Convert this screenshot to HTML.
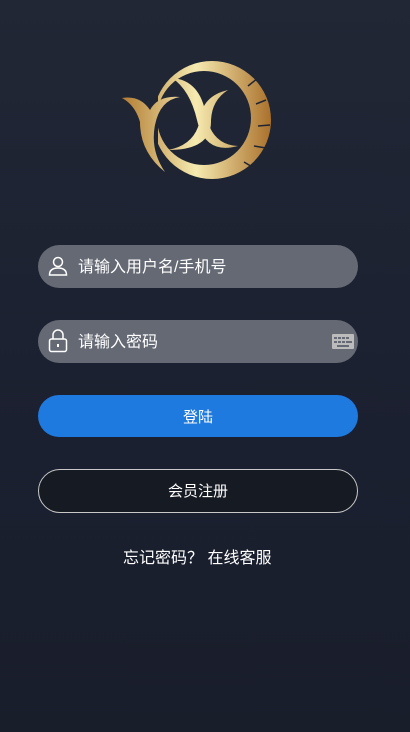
<!DOCTYPE html>
<html><head><meta charset="utf-8"><style>
body{margin:0;width:410px;height:732px;overflow:hidden;background:linear-gradient(#212735,#1b2030 60%,#191e2b);font-family:"Liberation Sans","Noto Sans CJK SC",sans-serif;position:relative}
.in{position:absolute;left:38px;width:320px;height:43px;border-radius:22px;background:#646974;color:#fff;font-size:16px;line-height:45px}
.in span{position:absolute;left:40px}
.btn{position:absolute;left:38px;width:320px;height:42px;border-radius:22px;text-align:center;line-height:46px;color:#fff;font-size:15px}
</style></head><body>
<svg style="position:absolute;left:0;top:0" width="410" height="200">
<defs><linearGradient id="g2" gradientUnits="userSpaceOnUse" x1="120" y1="0" x2="272" y2="0"><stop offset="0" stop-color="#b07a30"/><stop offset=".5" stop-color="#f6eab0"/><stop offset="1" stop-color="#a96f2a"/></linearGradient>
<mask id="m"><rect width="410" height="200" fill="#fff"/><circle cx="204" cy="118" r="47" fill="#000"/><rect x="100" y="85" width="58" height="70" fill="#000"/></mask></defs>
<g fill="url(#g2)">
<circle cx="212" cy="120" r="59" mask="url(#m)"/>
<path d="M122 98 Q140 95 150 110 Q158 95 180 97 Q160 100 155 125 Q150 150 165 172 Q140 152 140 122 Q135 105 122 98Z"/>
<path d="M172 78 Q200 80 206 115 Q212 145 238 146 Q205 155 197 120 Q190 90 172 78Z"/>
<path d="M228 90 Q202 96 200 120 Q195 145 168 150 Q212 150 211 120 Q212 100 228 90Z"/>
</g>
<g stroke="#1f2533" stroke-width="1.5"><path d="M258 78 L248 86 M266 100 L256 104 M270 125 L258 126 M266 148 L254 146 M254 168 L244 162"/></g>
</svg>
<div class="in" style="top:245px"><svg style="position:absolute;left:10px;top:11px" width="20" height="20" viewBox="0 0 20 20" fill="none" stroke="#fff" stroke-width="1.5"><circle cx="10" cy="6" r="4.5"/><path d="M1.5 19 Q1.5 12 10 12 Q18.5 12 18.5 19Z"/></svg><span>请输入用户名/手机号</span></div>
<div class="in" style="top:320px"><svg style="position:absolute;left:10px;top:9px" width="20" height="24" viewBox="0 0 20 24" fill="none" stroke="#fff" stroke-width="1.5"><path d="M5 10 V6 A5 5 0 0 1 15 6 V10"/><rect x="1.5" y="10" width="17" height="12.5" rx="2"/><path d="M10 15 V18" stroke-width="2"/></svg><span>请输入密码</span>
<svg style="position:absolute;left:294px;top:14px" width="22" height="15"><rect width="22" height="15" rx="1" fill="#bbb"/><g fill="#646974"><rect x="2" y="3" width="3" height="2"/><rect x="6" y="3" width="3" height="2"/><rect x="10" y="3" width="3" height="2"/><rect x="14" y="3" width="3" height="2"/><rect x="2" y="7" width="3" height="2"/><rect x="6" y="7" width="3" height="2"/><rect x="10" y="7" width="3" height="2"/><rect x="14" y="7" width="6" height="2"/><rect x="5" y="11" width="12" height="2"/></g></svg></div>
<div class="btn" style="top:395px;background:#1f7ae0">登陆</div>
<div class="btn" style="top:469px;height:44px;border:1px solid #c8c8c8;box-sizing:border-box;width:320px;line-height:44px;background:#161a23">会员注册</div>
<div style="position:absolute;top:544px;left:123px;white-space:nowrap;color:#fff;font-size:16px">忘记密码？&nbsp;在线客服</div>
</body></html>
